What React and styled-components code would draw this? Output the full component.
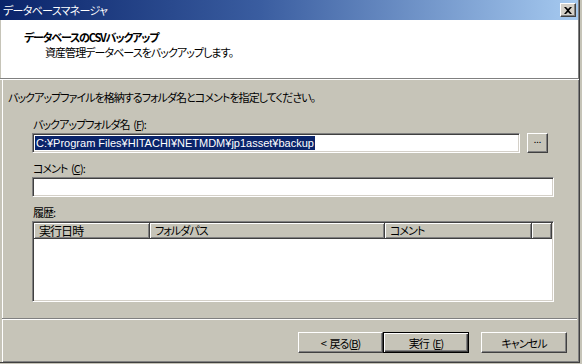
import React from 'react';
import styled, { createGlobalStyle } from 'styled-components';

const GlobalStyle = createGlobalStyle`
  html, body {
    margin: 0;
    padding: 0;
    background: #c6c4b8;
  }
  body {
    font-family: "Noto Sans CJK JP", "Liberation Sans", sans-serif;
    font-size: 11px;
    letter-spacing: -0.95px;
    word-spacing: 2px;
    font-feature-settings: "palt";
    color: #000;
  }
`;

const Window = styled.div`
  width: 580px;
  height: 363px;
  box-sizing: border-box;
  display: flex;
  flex-direction: column;
  background: #c6c4b8;
  border-right: 1px solid #404040;
  border-bottom: 1px solid #404040;
  box-shadow: inset -1px -1px #808080;
`;

const TitleBar = styled.div`
  height: 20px;
  flex: none;
  display: flex;
  align-items: center;
  justify-content: space-between;
  padding: 0 2px 0 3px;
  margin-right: 1px;
  background: linear-gradient(to right, #0a246a, #3a5da0 45%, #a6caf0);
  color: #fff;
  line-height: 20px;
  letter-spacing: -0.7px;
`;

const CloseButton = styled.div`
  width: 16px;
  height: 14px;
  box-sizing: border-box;
  display: flex;
  align-items: center;
  justify-content: center;
  background: #d4d0c8;
  border: 1px solid;
  border-color: #fff #404040 #404040 #fff;
  box-shadow: inset -1px -1px #808080;
`;

const Header = styled.div`
  height: 58px;
  flex: none;
  box-sizing: border-box;
  margin-left: 1px;
  margin-right: 1px;
  padding: 10px 0 0 23px;
  background: #fff;
  line-height: 14px;
`;

const HeaderTitle = styled.div`
  font-weight: bold;
  letter-spacing: -1.2px;
`;

const HeaderSub = styled.div`
  padding-left: 21px;
  margin-top: 1px;
`;

const Separator = styled.div`
  flex: none;
  height: 0;
  margin: 0 ${p => p.$inset || 0}px;
  border-top: 1px solid #808080;
  border-bottom: 1px solid #fff;
`;

const Body = styled.div`
  flex: 1;
  display: flex;
  flex-direction: column;
  padding: 10px 0 0 8px;
  box-shadow: inset 2px 0 #c6c4b8, inset 3px 0 #fff;
`;

const Instruction = styled.div`
  line-height: 14px;
`;

const Form = styled.div`
  width: 522px;
  margin: 13px 0 0 24px;
  display: flex;
  flex-direction: column;
`;

const Label = styled.div`
  line-height: 14px;
  margin: ${p => (p.$first ? 0 : 8)}px 0 2px 1px;
`;

const Row = styled.div`
  display: flex;
  align-items: center;
`;

const TextBox = styled.div`
  flex: ${p => (p.$fill ? 1 : 'none')};
  height: 20px;
  box-sizing: border-box;
  display: flex;
  align-items: center;
  padding-left: 2px;
  background: #fff;
  border: 1px solid;
  border-color: #808080 #fff #fff #808080;
  box-shadow: inset 1px 1px #404040, inset -1px -1px #d4d0c8;
  font-family: "Liberation Sans", "Noto Sans CJK JP", sans-serif;
  letter-spacing: 0;
  word-spacing: 0;
`;

const Selected = styled.span`
  background: #0a246a;
  color: #fff;
  line-height: 14px;
  padding: 0 1px;
`;

const Button = styled.div`
  width: ${p => p.$w}px;
  height: 21px;
  box-sizing: border-box;
  display: flex;
  align-items: center;
  justify-content: center;
  background: #c6c4b8;
  border: 1px solid;
  border-color: ${p => (p.$default ? '#000' : '#fff #404040 #404040 #fff')};
  box-shadow: ${p =>
    p.$default
      ? 'inset 1px 1px #fff, inset -1px -1px #404040, inset -2px -2px #808080'
      : 'inset -1px -1px #808080'};
  line-height: 14px;
  white-space: pre;
`;

const BrowseButton = styled(Button)`
  height: 20px;
  margin: 0 6px 0 7px;
  font-size: 9px;
  letter-spacing: 0;
  align-items: flex-end;
  padding-bottom: 5px;
`;

const ListView = styled.div`
  height: 81px;
  box-sizing: border-box;
  background: #fff;
  border: 1px solid;
  border-color: #808080 #fff #fff #808080;
  box-shadow: inset 1px 1px #404040, inset -1px -1px #d4d0c8;
  padding: 1px;
`;

const ListHeader = styled.div`
  display: grid;
  grid-template-columns: 116px 235px 147px 1fr;
  height: 16px;
`;

const HeaderCell = styled.div`
  box-sizing: border-box;
  background: #c6c4b8;
  border-right: 1px solid #404040;
  border-bottom: 1px solid #404040;
  box-shadow: inset 1px 1px #fff, inset -1px -1px #808080;
  padding-left: 5px;
  line-height: 15px;
  font-size: ${p => p.$size || 11}px;
`;

const Footer = styled.div`
  flex: none;
  height: 42px;
  box-sizing: border-box;
  display: flex;
  justify-content: flex-end;
  padding: 12px 12px 0 0;
  box-shadow: inset 2px 0 #c6c4b8, inset 3px 0 #fff;
`;

const ButtonGap = styled.div`
  width: ${p => p.$w}px;
`;

function App() {
  return (
    <>
      <GlobalStyle />
      <Window>
        <TitleBar>
          <span>データベースマネージャ</span>
          <CloseButton>
            <svg width="8" height="7" viewBox="0 0 8 7">
              <path d="M0 0h2l2 2 2-2h2L5 3.5 8 7H6L4 5 2 7H0l3-3.5z" fill="#000" />
            </svg>
          </CloseButton>
        </TitleBar>
        <Header>
          <HeaderTitle>データベースのCSVバックアップ</HeaderTitle>
          <HeaderSub>資産管理データベースをバックアップします。</HeaderSub>
        </Header>
        <Separator />
        <Body>
          <Instruction>バックアップファイルを格納するフォルダ名とコメントを指定してください。</Instruction>
          <Form>
            <Label $first>
              バックアップフォルダ名 (<u>F</u>):
            </Label>
            <Row>
              <TextBox $fill>
                <Selected>C:¥Program Files¥HITACHI¥NETMDM¥jp1asset¥backup</Selected>
              </TextBox>
              <BrowseButton $w={21}>...</BrowseButton>
            </Row>
            <Label>
              コメント (<u>C</u>):
            </Label>
            <TextBox />
            <Label>履歴:</Label>
            <ListView>
              <ListHeader>
                <HeaderCell $size={12}>実行日時</HeaderCell>
                <HeaderCell>フォルダパス</HeaderCell>
                <HeaderCell>コメント</HeaderCell>
                <HeaderCell />
              </ListHeader>
            </ListView>
          </Form>
        </Body>
        <Separator $inset={2} />
        <Footer>
          <Button $w={85}>
            {'< 戻る('}<u>B</u>)
          </Button>
          <ButtonGap $w={0} />
          <Button $w={86} $default>
            {'実行 ('}<u>E</u>)
          </Button>
          <ButtonGap $w={12} />
          <Button $w={86}>キャンセル</Button>
        </Footer>
      </Window>
    </>
  );
}

export default App;
